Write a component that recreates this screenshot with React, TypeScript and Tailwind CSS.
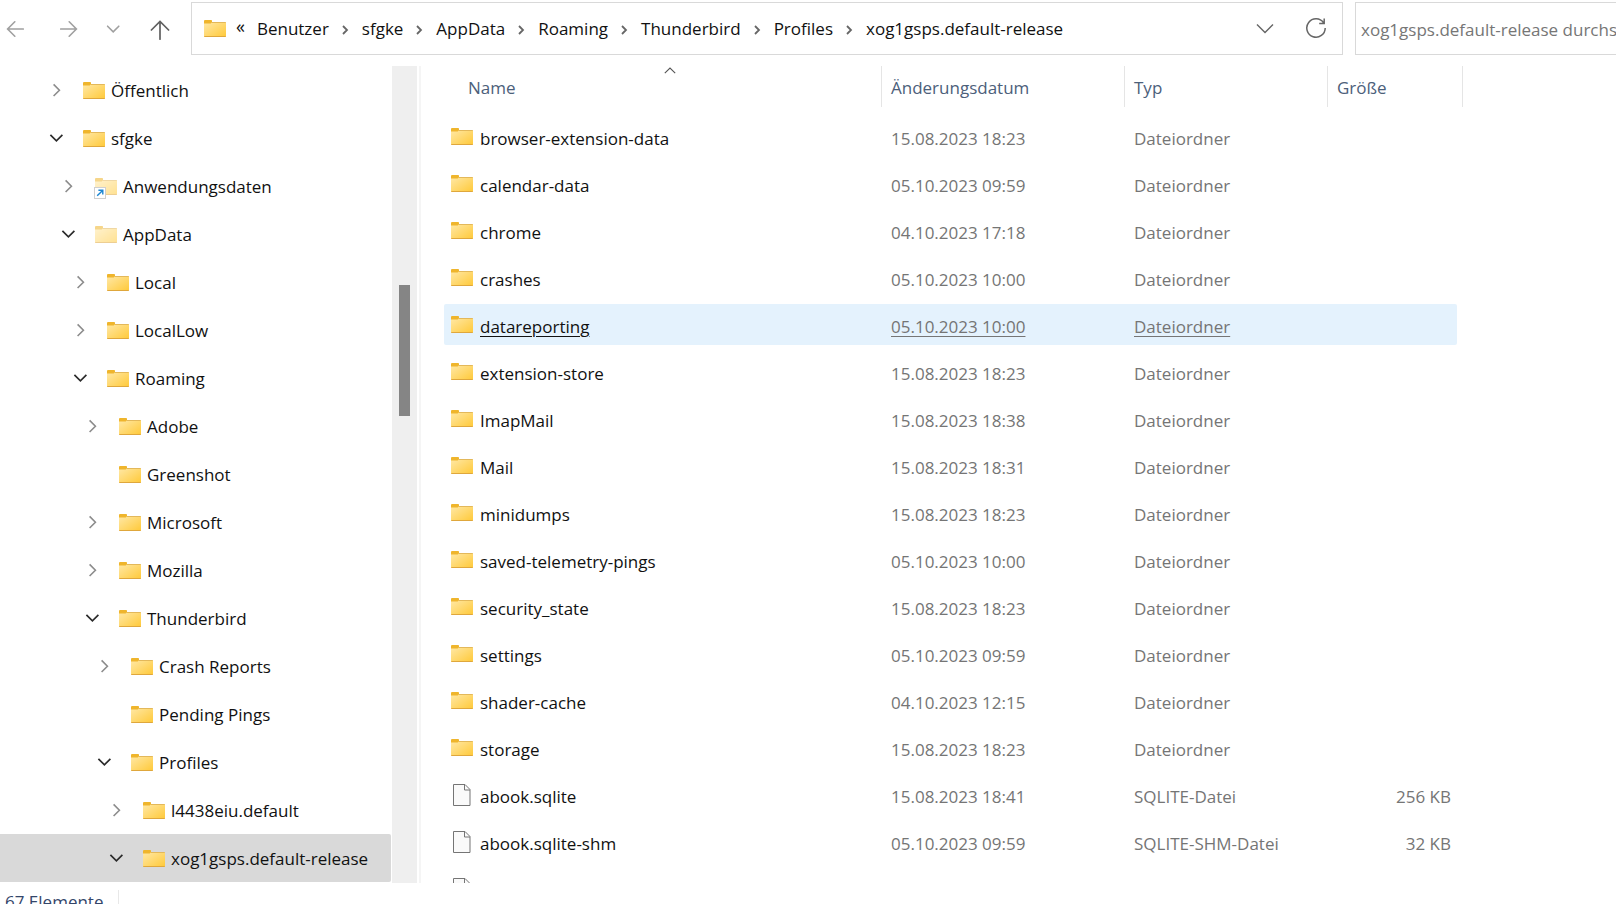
import React from "react";

type TreeNode = {
  name: string;
  level: number;
  state?: "open" | "closed";
  faded?: boolean;
  link?: boolean;
  selected?: boolean;
};

type FileEntry = {
  name: string;
  date: string;
  type: string;
  size?: string;
  file?: boolean;
  hovered?: boolean;
};

const tree: TreeNode[] = [
  { name: "Öffentlich", level: 0, state: "closed" },
  { name: "sfgke", level: 0, state: "open" },
  { name: "Anwendungsdaten", level: 1, state: "closed", faded: true, link: true },
  { name: "AppData", level: 1, state: "open", faded: true },
  { name: "Local", level: 2, state: "closed" },
  { name: "LocalLow", level: 2, state: "closed" },
  { name: "Roaming", level: 2, state: "open" },
  { name: "Adobe", level: 3, state: "closed" },
  { name: "Greenshot", level: 3 },
  { name: "Microsoft", level: 3, state: "closed" },
  { name: "Mozilla", level: 3, state: "closed" },
  { name: "Thunderbird", level: 3, state: "open" },
  { name: "Crash Reports", level: 4, state: "closed" },
  { name: "Pending Pings", level: 4 },
  { name: "Profiles", level: 4, state: "open" },
  { name: "l4438eiu.default", level: 5, state: "closed" },
  { name: "xog1gsps.default-release", level: 5, state: "open", selected: true },
];

const indents = ["pl-[47px]", "pl-[59px]", "pl-[71px]", "pl-[83px]", "pl-[95px]", "pl-[107px]"];

const files: FileEntry[] = [
  { name: "browser-extension-data", date: "15.08.2023 18:23", type: "Dateiordner" },
  { name: "calendar-data", date: "05.10.2023 09:59", type: "Dateiordner" },
  { name: "chrome", date: "04.10.2023 17:18", type: "Dateiordner" },
  { name: "crashes", date: "05.10.2023 10:00", type: "Dateiordner" },
  { name: "datareporting", date: "05.10.2023 10:00", type: "Dateiordner", hovered: true },
  { name: "extension-store", date: "15.08.2023 18:23", type: "Dateiordner" },
  { name: "ImapMail", date: "15.08.2023 18:38", type: "Dateiordner" },
  { name: "Mail", date: "15.08.2023 18:31", type: "Dateiordner" },
  { name: "minidumps", date: "15.08.2023 18:23", type: "Dateiordner" },
  { name: "saved-telemetry-pings", date: "05.10.2023 10:00", type: "Dateiordner" },
  { name: "security_state", date: "15.08.2023 18:23", type: "Dateiordner" },
  { name: "settings", date: "05.10.2023 09:59", type: "Dateiordner" },
  { name: "shader-cache", date: "04.10.2023 12:15", type: "Dateiordner" },
  { name: "storage", date: "15.08.2023 18:23", type: "Dateiordner" },
  { name: "abook.sqlite", date: "15.08.2023 18:41", type: "SQLITE-Datei", size: "256 KB", file: true },
  { name: "abook.sqlite-shm", date: "05.10.2023 09:59", type: "SQLITE-SHM-Datei", size: "32 KB", file: true },
];

const crumbs = ["Benutzer", "sfgke", "AppData", "Roaming", "Thunderbird", "Profiles", "xog1gsps.default-release"];

function FolderIcon({ faded, link }: { faded?: boolean; link?: boolean }) {
  return (
    <svg width="22" height="17" viewBox="0 0 22 17" className="shrink-0 overflow-visible" aria-hidden="true">
      <defs>
        <linearGradient id="folder-face" x1="0" y1="0" x2="1" y2="1">
          <stop offset="0" stopColor="#ffe8a6" />
          <stop offset="1" stopColor="#ffc938" />
        </linearGradient>
      </defs>
      <g opacity={faded ? 0.55 : 1}>
        <path d="M0 1a1 1 0 0 1 1-1h6.2a.8.8 0 0 1 .8.8V4H0Z" fill="#efb52c" />
        <path d="M0 3.6h6.2c.8 0 1.2-1.4 2-1.4H22V16a1 1 0 0 1-1 1H1a1 1 0 0 1-1-1Z" fill="url(#folder-face)" />
        <path d="M8 2h13a1 1 0 0 1 1 1H7.4Z" fill="#e3b85a" />
        <path d="M0 15.9h22V16a1 1 0 0 1-1 1H1a1 1 0 0 1-1-1Z" fill="#dfa73c" />
      </g>
      {link && (
        <g>
          <rect x="-0.5" y="9.5" width="11" height="11" fill="#fff" stroke="#cfcfcf" />
          <path d="M2.2 17.8 7.6 12.4M3.4 12.2h4.4v4.4" fill="none" stroke="#1c86d1" strokeWidth="1.4" />
        </g>
      )}
    </svg>
  );
}

function FileIcon() {
  return (
    <svg width="18" height="22" viewBox="0 0 18 22" className="shrink-0" aria-hidden="true">
      <path d="M.5.5h11.5l5 5v16H.5Z" fill="#fafafa" stroke="#757575" strokeWidth="1" />
      <path d="M11.5.5v5.5H17" fill="none" stroke="#757575" strokeWidth="1" />
    </svg>
  );
}

function Chevron({ open }: { open: boolean }) {
  return open ? (
    <svg width="14" height="14" viewBox="0 0 14 14" aria-hidden="true">
      <path d="M1.4 3.8 7.4 9.8l6-6" fill="none" stroke="#2b2b2b" strokeWidth="1.7" />
    </svg>
  ) : (
    <svg width="14" height="14" viewBox="0 0 14 14" aria-hidden="true">
      <path d="M4.6 1.4 10.4 7.2l-5.8 5.8" fill="none" stroke="#8c8c8c" strokeWidth="1.6" />
    </svg>
  );
}

function Toolbar() {
  return (
    <header className="flex h-[66px] shrink-0 items-start pt-[2px]">
      <div className="flex h-[53px] w-[191px] shrink-0 items-center">
        <button aria-label="Zurück" className="ml-[6px]">
          <svg width="18" height="18" viewBox="0 0 18 18" fill="none" stroke="#a0a0a0" strokeWidth="1.6" strokeLinecap="round">
            <path d="M17.3 9H1.6M8.8 1.8 1.6 9l7.2 7.2" />
          </svg>
        </button>
        <button aria-label="Vorwärts" className="ml-[36px]">
          <svg width="18" height="18" viewBox="0 0 18 18" fill="none" stroke="#a0a0a0" strokeWidth="1.6" strokeLinecap="round">
            <path d="M.7 9h15.7M9.2 1.8 16.4 9l-7.2 7.2" />
          </svg>
        </button>
        <button aria-label="Zuletzt besuchte Orte" className="ml-[28px]">
          <svg width="14" height="14" viewBox="0 0 14 14">
            <path d="M1.6 4.2 7.2 9.8l5.6-5.6" fill="none" stroke="#a0a0a0" strokeWidth="1.6" strokeLinecap="round" />
          </svg>
        </button>
        <button aria-label="Nach oben" className="ml-[30px] mt-[2px]">
          <svg width="20" height="20" viewBox="0 0 20 20">
            <path d="M10 19.2V1.4M1.4 10 10 1.4l8.6 8.6" fill="none" stroke="#606060" strokeWidth="1.7" strokeLinecap="round" />
          </svg>
        </button>
      </div>

      <div className="flex h-[53px] min-w-0 flex-1 items-center border border-[#d9d9d9] pl-3 pr-[15px]">
        <FolderIcon />
        <span className="ml-[10px] pb-[5px] text-[18px] leading-6">«</span>
        <nav aria-label="Adresse" className="ml-[12px] flex min-w-0 flex-1 items-center">
          {crumbs.map((c, i) => (
            <React.Fragment key={c}>
              {i > 0 && (
                <svg width="33" height="12" viewBox="0 0 33 12" className="mt-[2px] shrink-0" aria-hidden="true">
                  <path d="M14 2l4 4-4 4" fill="none" stroke="#666" strokeWidth="1.8" />
                </svg>
              )}
              <a href="#" className="whitespace-nowrap">
                {c}
              </a>
            </React.Fragment>
          ))}
        </nav>
        <button aria-label="Vorherige Orte">
          <svg width="18" height="12" viewBox="0 0 18 12">
            <path d="M1 1.5l8 8 8-8" fill="none" stroke="#666" strokeWidth="1.4" />
          </svg>
        </button>
        <button aria-label="Aktualisieren" className="mb-[2px] ml-[31px]">
          <svg width="22" height="22" viewBox="0 0 22 22">
            <path d="M18.6 5.8A9.2 9.2 0 1 0 20.2 11M19.2 1.6v4.8h-5" fill="none" stroke="#666" strokeWidth="1.5" />
          </svg>
        </button>
      </div>

      <input
        type="text"
        aria-label="Suchen"
        placeholder="xog1gsps.default-release durchsuchen"
        className="ml-3 h-[53px] w-[261px] shrink-0 border border-r-0 border-[#d9d9d9] pl-[5px] pt-[2px] outline-none placeholder:text-[#767676]"
      />
    </header>
  );
}

function Sidebar() {
  return (
    <aside className="flex w-[421px] shrink-0">
      <ul className="min-w-0 flex-1 pr-px">
        {tree.map((n) => (
          <li key={n.name}>
            <button
              className={`flex h-12 w-full items-center rounded-r-xs text-left ${indents[n.level]} ${
                n.selected ? "bg-[#d9d9d9]" : ""
              }`}
            >
              <span className="mr-[18px] flex w-[18px] shrink-0 items-center pl-[2px]">
                {n.state && <Chevron open={n.state === "open"} />}
              </span>
              <FolderIcon faded={n.faded} link={n.link} />
              <span className="ml-[6px] whitespace-nowrap pt-[2px]">{n.name}</span>
            </button>
          </li>
        ))}
      </ul>
      <div className="flex w-[25px] shrink-0 justify-center bg-[#efefef] pt-[219px]">
        <div className="h-[131px] w-[11px] bg-[#858585]" />
      </div>
      <div className="ml-[2px] w-[2px] bg-[#f5f5f5]" />
    </aside>
  );
}

function FileList() {
  const head = "h-[47px] p-0 text-left align-top font-normal text-[#4c607a]";
  const headInner = "flex h-[41px] items-center border-r border-[#e5e5e5] pt-[2px]";
  return (
    <main className="min-w-0 flex-1 overflow-hidden pl-[23px]">
      <table className="w-[1019px] table-fixed border-collapse">
        <colgroup>
          <col className="w-[438px]" />
          <col className="w-[243px]" />
          <col className="w-[203px]" />
          <col className="w-[135px]" />
        </colgroup>
        <thead>
          <tr>
            <th className={head}>
              <div className={`${headInner} relative pl-[24px]`}>
                Name
                <svg width="12" height="7" viewBox="0 0 12 7" className="absolute left-[220px] top-px" aria-hidden="true">
                  <path d="M.8 6.2 6 1l5.2 5.2" fill="none" stroke="#555" strokeWidth="1.1" />
                </svg>
              </div>
            </th>
            <th className={head}>
              <div className={`${headInner} pl-[9px]`}>Änderungsdatum</div>
            </th>
            <th className={head}>
              <div className={`${headInner} pl-[9px]`}>Typ</div>
            </th>
            <th className={head}>
              <div className={`${headInner} pl-[9px]`}>Größe</div>
            </th>
          </tr>
        </thead>
        <tbody>
          {files.map((f) => {
            const cell = `flex h-[41px] items-center ${f.hovered ? "bg-[#e4f2fd] underline underline-offset-3" : ""}`;
            return (
              <tr key={f.name}>
                <td className="px-0 py-[3px]">
                  <div className={`${cell} rounded-l-xs pl-[7px]`}>
                    <span className="flex w-[29px] shrink-0 items-center">
                      {f.file ? (
                        <span className="pl-[2px]">
                          <FileIcon />
                        </span>
                      ) : (
                        <FolderIcon />
                      )}
                    </span>
                    <span className="pt-[5px]">{f.name}</span>
                  </div>
                </td>
                <td className="px-0 py-[3px] text-[#757575]">
                  <div className={`${cell} pl-[9px] pt-[5px]`}>{f.date}</div>
                </td>
                <td className="px-0 py-[3px] text-[#757575]">
                  <div className={`${cell} pl-[9px] pt-[5px]`}>{f.type}</div>
                </td>
                <td className="py-[3px] pl-0 pr-[6px] text-[#757575]">
                  <div className={`${cell} justify-end rounded-r-xs pr-[6px] pt-[5px]`}>{f.size}</div>
                </td>
              </tr>
            );
          })}
          <tr>
            <td className="px-0 py-[3px]">
              <div className="flex h-[41px] items-center pl-[9px]">
                <FileIcon />
              </div>
            </td>
          </tr>
        </tbody>
      </table>
    </main>
  );
}

export default function App() {
  return (
    <div className="flex h-screen flex-col overflow-hidden bg-white font-['Open_Sans','Noto_Sans',sans-serif] text-[17px] leading-6 text-[#111]">
      <Toolbar />
      <div className="flex min-h-0 flex-1 overflow-hidden">
        <Sidebar />
        <FileList />
      </div>
      <footer className="flex h-[21px] shrink-0 items-start pl-[5px] pt-[7px] text-[#34466a]">
        <span className="w-[114px] border-r border-[#e8e8e8]">67 Elemente</span>
      </footer>
    </div>
  );
}
